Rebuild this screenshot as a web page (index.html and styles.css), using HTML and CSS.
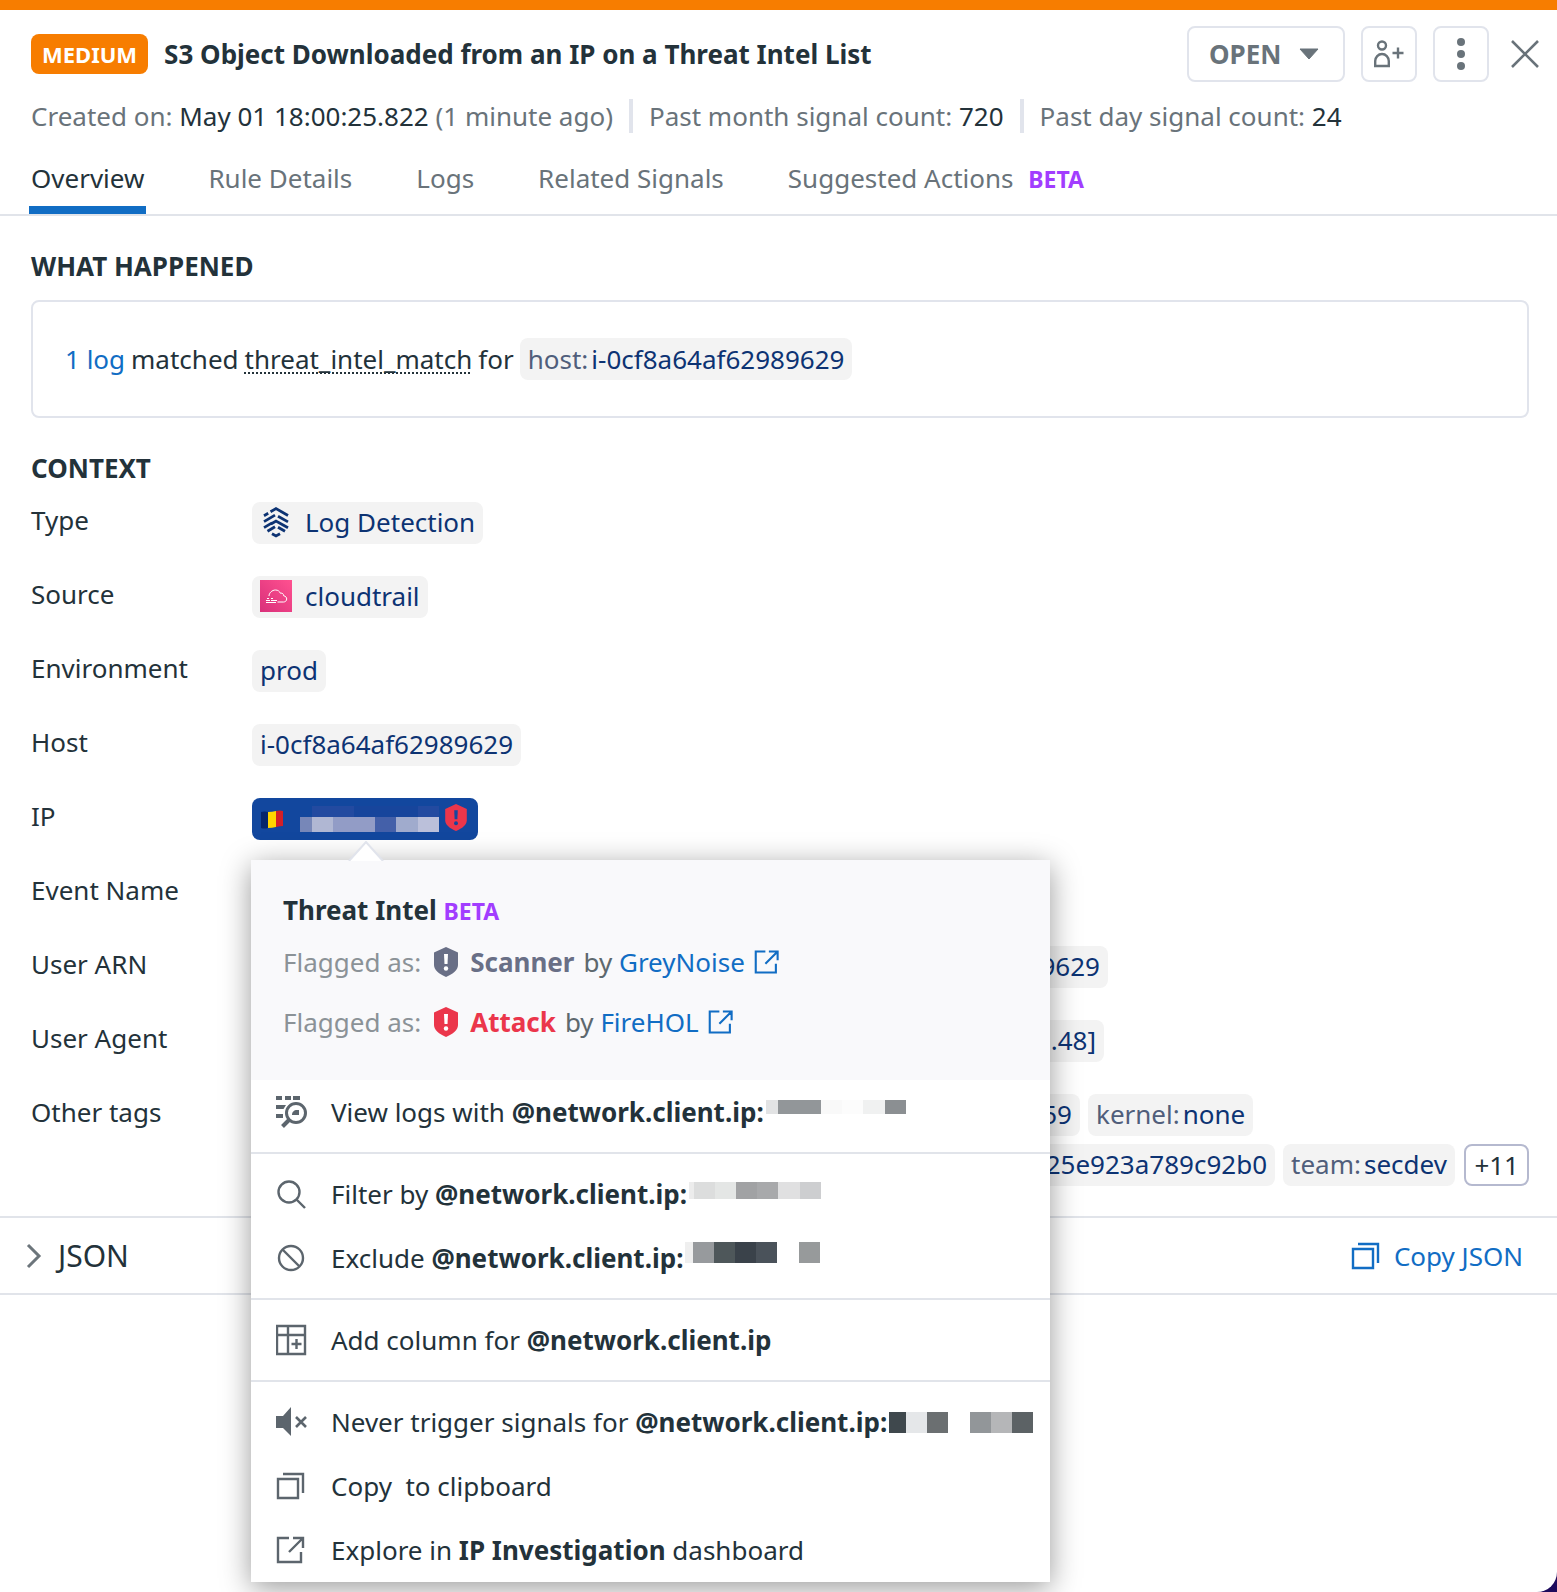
FILE: index.html
```html
<!DOCTYPE html>
<html lang="en">
<head>
<meta charset="utf-8">
<meta name="viewport" content="width=device-width, initial-scale=1">
<title>S3 Object Downloaded from an IP on a Threat Intel List</title>
<link rel="stylesheet" href="styles.css">
</head>
<body>
<svg class="sprite" aria-hidden="true">
  <symbol id="shield" viewBox="0 0 24 30"><path fill="currentColor" d="M12 0l12 5.500v12.500c0 5-5 9-12 12c-7-3-12-7-12-12v-12.500z"/><path class="mark" d="M10 7h4l-.5 10h-3z"/><circle class="mark" cx="12" cy="21.500" r="2.200"/></symbol>
  <symbol id="external" viewBox="0 0 32 32"><path d="M13 4H2v24h23V18M17 4h10v10M27 4L13 18" fill="none" stroke="currentColor" stroke-width="2.400"/></symbol>
  <symbol id="copy" viewBox="0 0 32 32"><path d="M2 9h20v19H2zM7 4h20v19" fill="none" stroke="currentColor" stroke-width="2.400"/></symbol>
</svg>
<div class="panel">
  <header class="header">
    <div class="title-row">
      <span class="severity">MEDIUM</span>
      <h1 class="title">S3 Object Downloaded from an IP on a Threat Intel List</h1>
      <div class="actions">
        <button type="button" class="btn btn-state">OPEN
          <svg width="20" height="12" viewBox="0 0 20 12"><path d="M1 1h18L10 11z" fill="currentColor" stroke="currentColor" stroke-linejoin="round"/></svg>
        </button>
        <button type="button" class="btn btn-icon" aria-label="Assign">
          <svg width="32" height="32" viewBox="0 0 32 32" fill="none" stroke="currentColor" stroke-width="2.400"><circle cx="9" cy="7.500" r="4"/><path d="M2.200 28v-5a6.800 7 0 0 1 13.600 0v5zM25 9.500v11M19.500 15h11"/></svg>
        </button>
        <button type="button" class="btn btn-icon" aria-label="More">
          <svg width="8" height="32" viewBox="0 0 8 32" fill="currentColor"><circle cx="4" cy="4" r="4"/><circle cx="4" cy="16" r="4"/><circle cx="4" cy="28" r="4"/></svg>
        </button>
        <button type="button" class="btn-close" aria-label="Close">
          <svg width="28" height="28" viewBox="0 0 28 28" fill="none" stroke="currentColor" stroke-width="2.600"><path d="M1 1l26 26M27 1L1 27"/></svg>
        </button>
      </div>
    </div>
    <div class="meta">
      <span>Created on: <b>May 01 18:00:25.822</b> (1 minute ago)</span>
      <span class="sep"></span>
      <span>Past month signal count: <b>720</b></span>
      <span class="sep"></span>
      <span>Past day signal count: <b>24</b></span>
    </div>
  </header>
  <nav class="tabs">
    <a href="#overview" class="tab tab-active" aria-current="page">Overview</a>
    <a href="#rule" class="tab">Rule Details</a>
    <a href="#logs" class="tab">Logs</a>
    <a href="#related" class="tab">Related Signals</a>
    <a href="#actions" class="tab">Suggested Actions <span class="beta">BETA</span></a>
  </nav>
  <main class="main">
    <h2 class="heading">WHAT HAPPENED</h2>
    <div class="summary">
      <a href="#logs">1 log</a> matched <span class="term">threat_intel_match</span> for
      <span class="chip"><i>host:</i>i-0cf8a64af62989629</span>
    </div>
    <h2 class="heading">CONTEXT</h2>
    <dl class="context">
      <dt>Type</dt>
      <dd><span class="chip">
        <svg class="chip-icon" width="32" height="32" viewBox="-4 -1 32 32" fill="none" stroke="currentColor" stroke-width="2.800"><path d="M6.500 4.800L12 1.600l12 6.900M0 8.700l4.200-2.400M0 14.600l11-6.500M14 9.300l10 5.600M0 20.600l8-4.700M7 17l5-3l12 6.800M3.500 24.200l7.500-4.400M14 20.200l7 4M8 26.800l4 2.200l4-2.200"/></svg>Log Detection</span></dd>
      <dt>Source</dt>
      <dd><span class="chip">
        <svg class="chip-icon" width="32" height="32" viewBox="0 0 32 32"><defs><linearGradient id="pink" x1="0" y1="1" x2="1" y2="0"><stop offset="0" stop-color="#d9307a"/><stop offset="1" stop-color="#ff5190"/></linearGradient></defs><path fill="url(#pink)" d="M0 0h32v32H0z"/><path d="M9 16c0-3 3-6 6.500-6c2.500 0 4 1.300 5 3.300c2-.6 3 .7 3.200 2.500c2 .3 3 1.700 3 3.200c0 1.800-1.500 3-3.200 3h-6M7 18.500h2M11 18.500h2M6 20.500h4M11 20.500h6M6 22.500h10" fill="none" stroke="#fff"/></svg>cloudtrail</span></dd>
      <dt>Environment</dt>
      <dd><span class="chip">prod</span></dd>
      <dt>Host</dt>
      <dd><span class="chip">i-0cf8a64af62989629</span></dd>
      <dt>IP</dt>
      <dd class="anchor">
        <button type="button" class="ip" aria-label="IP address">
          <svg width="24" height="20" viewBox="0 0 24 20"><path fill="#06266b" d="M1 3q3.500-1 7 0v16q-3.500 1-7 0z"/><path fill="#ffd500" d="M8 3q4 0 8-1v16q-4 1-8 1z"/><path fill="#d31f28" d="M16 2q4-1 7 0v15q-3 0-7 1z"/></svg>
          <svg width="140" height="26" viewBox="0 0 140 26" shape-rendering="crispEdges"><path fill="#234aa0" d="M12 0h42v11H12zM118 0h21v11h-21z"/><path fill="#17459c" d="M54 0h64v11H54z"/><path fill="#7787b8" d="M0 11h12v15H0z"/><path fill="#b0b7d3" d="M12 11h21v15H12z"/><path fill="#929cc6" d="M33 11h42v15H33z"/><path fill="#4460a9" d="M75 11h21v15H75z"/><path fill="#a0abcd" d="M96 11h22v15H96z"/><path fill="#bbc0da" d="M118 11h21v15h-21z"/></svg>
          <svg class="shield-ip" width="22" height="27"><use href="#shield"/></svg>
        </button>
        <section class="popover">
          <svg class="arrow" width="36" height="20" viewBox="0 0 36 20"><path d="M1 20L18 1l17 19" fill="#fff" stroke="#e1e4ec" stroke-width="2"/></svg>
          <div class="intel">
            <h3 class="intel-title">Threat Intel <span class="beta">BETA</span></h3>
            <p class="flag">Flagged as: <svg class="shield-grey" width="24" height="30"><use href="#shield"/></svg> <b class="grey">Scanner</b> <span class="by">by <a href="#greynoise">GreyNoise</a></span> <a href="#greynoise" aria-label="Open GreyNoise"><svg width="28" height="28"><use href="#external"/></svg></a></p>
            <p class="flag">Flagged as: <svg class="shield-red" width="24" height="30"><use href="#shield"/></svg> <b class="red">Attack</b> <span class="by">by <a href="#firehol">FireHOL</a></span> <a href="#firehol" aria-label="Open FireHOL"><svg width="28" height="28"><use href="#external"/></svg></a></p>
          </div>
          <div class="group">
            <button type="button" class="item">
              <svg class="item-icon" width="32" height="32" viewBox="0 0 32 32"><path fill="currentColor" d="M0 0h6v4H0zM9 0h6v4H9zM17 0h7v4h-7zM0 9h10l-2.500 4H0zM0 18h7v4H0zM16 19c0-3 2-5 5-5h2v5z"/><circle cx="20" cy="17" r="9.500" fill="none" stroke="currentColor" stroke-width="3"/><path d="M13 24l-6.500 6.500" stroke="currentColor" stroke-width="4"/></svg>
              <span>View logs with <b>@network.client.ip:</b></span>
              <svg class="masked" width="140" height="32" viewBox="0 0 140 32" shape-rendering="crispEdges"><path fill="#e2e3e4" d="M0 4h12v14H0z"/><path fill="#929699" d="M12 4h43v14H12z"/><path fill="#f9f9f9" d="M55 4h21v14H55z"/><path fill="#fcfcfc" d="M76 4h21v14H76z"/><path fill="#f0f1f1" d="M97 4h22v14H97z"/><path fill="#8b8f92" d="M119 4h21v14h-21z"/></svg>
            </button>
          </div>
          <div class="group">
            <button type="button" class="item">
              <svg class="item-icon" width="32" height="32" viewBox="0 0 32 32" fill="none" stroke="currentColor" stroke-width="2.400"><circle cx="13" cy="14" r="10.500"/><path d="M20.500 21.500L29 30"/></svg>
              <span>Filter by <b>@network.client.ip:</b></span>
              <svg class="masked" width="132" height="32" viewBox="0 0 132 32" shape-rendering="crispEdges"><path fill="#ececec" d="M0 4h5v17H0z"/><path fill="#dcdddd" d="M5 4h21v17H5z"/><path fill="#e4e6e5" d="M26 4h21v17H26z"/><path fill="#a1a2a4" d="M47 4h21v17H47z"/><path fill="#a8a9ab" d="M68 4h21v17H68z"/><path fill="#e0e0e1" d="M89 4h22v17H89z"/><path fill="#cdced0" d="M111 4h21v17h-21z"/></svg>
            </button>
            <button type="button" class="item">
              <svg class="item-icon" width="32" height="32" viewBox="0 0 32 32" fill="none" stroke="currentColor" stroke-width="2.400"><circle cx="15" cy="16" r="12"/><path d="M6.500 7.500l17 17"/></svg>
              <span>Exclude <b>@network.client.ip:</b></span>
              <svg class="masked" width="135" height="32" viewBox="0 0 135 32" shape-rendering="crispEdges"><path fill="#efefef" d="M0 0h8v21H0z"/><path fill="#979a9d" d="M8 0h21v21H8z"/><path fill="#4e575a" d="M29 0h21v21H29z"/><path fill="#3a424a" d="M50 0h21v21H50z"/><path fill="#4a525a" d="M71 0h21v21H71z"/><path fill="#979a9b" d="M114 0h21v21h-21z"/></svg>
            </button>
          </div>
          <div class="group">
            <button type="button" class="item">
              <svg class="item-icon" width="32" height="32" viewBox="0 0 32 32" fill="none" stroke="currentColor" stroke-width="2.400"><path d="M1 2h28v28H1zM1 11h28M12 2v28M20.500 15v10M15.500 20h10"/></svg>
              <span>Add column for <b>@network.client.ip</b></span>
            </button>
          </div>
          <div class="group">
            <button type="button" class="item">
              <svg class="item-icon" width="32" height="32" viewBox="0 0 32 32"><path fill="currentColor" d="M0 10h7l8-9v29l-8-8H0z"/><path d="M20 11l10 10M30 11L20 21" stroke="currentColor" stroke-width="2.600"/></svg>
              <span>Never trigger signals for <b>@network.client.ip:</b></span>
              <svg class="masked" width="144" height="32" viewBox="0 0 144 32" shape-rendering="crispEdges"><path fill="#3f484d" d="M0 6h17v21H0z"/><path fill="#e5e7e9" d="M17 6h21v21H17z"/><path fill="#6b6f71" d="M38 6h21v21H38z"/><path fill="#929699" d="M81 6h21v21H81z"/><path fill="#b5b6b8" d="M102 6h21v21h-21z"/><path fill="#5c6265" d="M123 6h21v21h-21z"/></svg>
            </button>
            <button type="button" class="item">
              <svg class="item-icon" width="32" height="32"><use href="#copy"/></svg>
              <span>Copy  to clipboard</span>
            </button>
            <button type="button" class="item">
              <svg class="item-icon" width="32" height="32"><use href="#external"/></svg>
              <span>Explore in <b>IP Investigation</b> dashboard</span>
            </button>
          </div>
        </section>
      </dd>
      <dt>Event Name</dt>
      <dd><span class="chip"></span></dd>
      <dt>User ARN</dt>
      <dd><span class="chip chip-arn">9629</span></dd>
      <dt>User Agent</dt>
      <dd><span class="chip chip-agent">.48]</span></dd>
      <dt>Other tags</dt>
      <dd class="tags">
        <span class="chip chip-account">59</span>
        <span class="chip"><i>kernel:</i>none</span>
        <span class="chip chip-image">25e923a789c92b0</span>
        <span class="chip"><i>team:</i>secdev</span>
        <button type="button" class="more">+11</button>
      </dd>
    </dl>
  </main>
  <section class="json">
    <button type="button" class="json-toggle">
      <svg width="16" height="26" viewBox="0 0 16 26" fill="none" stroke="#6c757b" stroke-width="3"><path d="M2 2l11 11L2 24"/></svg>JSON
    </button>
    <button type="button" class="json-copy">
      <svg width="32" height="32"><use href="#copy"/></svg>Copy JSON
    </button>
  </section>
</div>
</body>
</html>
```
FILE: styles.css
```css
* { box-sizing: border-box; }

body {
  margin: 0;
  background: #1d0a5c;
  color: #23323a;
  font: 26px/36px "Noto Sans", sans-serif;
}

button {
  border: 0;
  padding: 0;
  background: none;
  color: inherit;
  font: inherit;
  cursor: pointer;
}

a { color: #116dc4; text-decoration: none; }
svg { flex: none; display: block; }
h1, h2, h3, p, dl, dd { margin: 0; }
.sprite { position: absolute; width: 0; height: 0; }

.panel {
  position: relative;
  min-height: 100vh;
  border-top: 10px solid #f77d00;
  border-bottom-right-radius: 20px;
  background: #fff;
  overflow: hidden;
}

.header { padding: 16px 12px 0 31px; }
.title-row { display: flex; align-items: center; gap: 16px; }
.severity {
  padding: 0 11px;
  border-radius: 8px;
  background: #f77d00;
  color: #fff;
  font-size: 22px;
  font-weight: 700;
  line-height: 40px;
}
.title { flex: 1; font-size: 26px; font-weight: 700; white-space: nowrap; }
.actions { display: flex; align-items: center; gap: 16px; color: #69737a; }
.btn {
  display: flex;
  align-items: center;
  justify-content: center;
  height: 56px;
  border: 2px solid #e1e4ec;
  border-radius: 8px;
}
.btn-state {
  justify-content: flex-start;
  width: 158px;
  padding-left: 20px;
  gap: 18px;
  font-weight: 700;
}
.btn-icon { width: 56px; }
.btn-close { padding: 6px; }

.meta {
  display: flex;
  align-items: center;
  gap: 16px;
  margin-top: 16px;
  color: #69737a;
  white-space: nowrap;
}
.meta b { color: #23323a; font-weight: 400; }
.sep { width: 4px; height: 34px; background: #e1e4ec; }

.tabs {
  display: flex;
  gap: 60px;
  margin-top: 8px;
  padding: 0 29px;
  border-bottom: 2px solid #e1e4ea;
}
.tab {
  height: 72px;
  padding: 0 2px;
  color: #69737a;
  line-height: 72px;
  white-space: nowrap;
}
.tab-active { color: #23323a; box-shadow: inset 0 -8px #116dc4; }
.beta { color: #a23dff; font-size: 23px; font-weight: 700; line-height: 1; }
.tab .beta { margin-left: 8px; }

.main { padding: 32px 28px 30px 31px; }
.heading { margin-bottom: 16px; font-size: 26px; font-weight: 700; }

.summary {
  display: flex;
  align-items: center;
  gap: 6px;
  margin-bottom: 32px;
  padding: 36px 32px;
  border: 2px solid #e1e4ec;
  border-radius: 8px;
  white-space: nowrap;
}
.term {
  text-decoration: underline dotted 2px;
  text-decoration-skip-ink: none;
  text-underline-offset: 3px;
}

.chip {
  display: inline-flex;
  align-items: center;
  height: 42px;
  padding: 0 8px;
  border-radius: 8px;
  background: #f3f3f3;
  color: #0d3373;
  line-height: 40px;
  white-space: nowrap;
}
.context .chip { padding-bottom: 2px; }
.chip i { color: #505e7b; font-style: normal; margin-right: 3px; }
.chip-icon { margin-right: 13px; }

.context {
  display: grid;
  grid-template-columns: 221px 1fr;
  row-gap: 32px;
}
.context dd { display: flex; }
.context .tags { flex-wrap: wrap; gap: 8px; }
.chip-arn, .chip-agent, .chip-account, .chip-image { justify-content: flex-end; }
.chip-arn { width: 856px; }
.chip-agent { width: 852px; }
.chip-account { width: 828px; }
.chip-image { width: 1023px; }
.tags .chip:nth-child(2) { margin-right: auto; }
.more {
  height: 42px;
  margin-left: auto;
  padding: 0 8px;
  border: 2px solid #b5b9cf;
  border-radius: 8px;
}

.anchor { position: relative; }
.ip {
  display: flex;
  align-items: center;
  width: 226px;
  height: 42px;
  padding: 0 8px;
  border-radius: 8px;
  background: #12479e;
}
.ip svg + svg { margin-left: 16px; }
.ip .shield-ip { --mark: #12479e; margin: 0 0 4px 5px; color: #eb364b; }
.mark { fill: var(--mark, #fff); }
.shield-grey { color: #696f86; }
.shield-red { color: #eb364b; }

.popover {
  position: absolute;
  z-index: 2;
  top: 62px;
  left: -1px;
  width: 799px;
  background: #fff;
  box-shadow: 0 6px 28px rgba(0, 0, 0, .4);
}
.arrow { position: absolute; top: -19px; left: 97px; }
.intel { padding: 32px 32px 28px; background: #f9f9fb; }
.intel-title { margin-bottom: 4px; font-size: 26px; font-weight: 700; }
.flag {
  display: flex;
  align-items: center;
  gap: 9px;
  height: 60px;
  color: #8b9297;
  white-space: nowrap;
}
.flag > svg { margin: 0 3px 0 4px; }
.by { color: #5d686e; }
.grey { color: #696f86; }
.red { color: #eb364b; }

.group { padding: 8px 0; border-top: 2px solid #e1e4ea; }
.intel + .group { padding-top: 0; border-top: 0; }
.group:last-child { padding-bottom: 0; }
.item {
  display: flex;
  align-items: center;
  width: 100%;
  height: 64px;
  padding-left: 25px;
  text-align: left;
  white-space: pre;
}
.item-icon { margin-right: 23px; color: #5c656d; }
.masked { margin-left: 2px; }

.json {
  display: flex;
  align-items: center;
  justify-content: space-between;
  height: 79px;
  padding: 0 34px 0 26px;
  border: solid #e1e4ea;
  border-width: 2px 0;
}
.json-toggle { display: flex; align-items: center; gap: 16px; font-size: 30px; }
.json-copy { display: flex; align-items: center; gap: 11px; color: #116dc4; }
```
